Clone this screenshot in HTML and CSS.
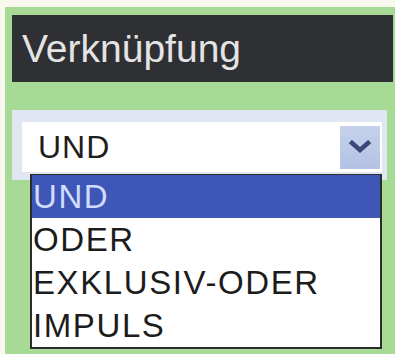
FILE: index.html
```html
<!DOCTYPE html>
<html lang="de">
<head>
<meta charset="utf-8">
<title>Verknüpfung</title>
<link rel="stylesheet" href="styles.css">
</head>
<body>
<div class="panel">
  <div class="header">Verknüpfung</div>
  <div class="select-frame">
    <div class="select">
      <span class="select-value">UND</span>
      <span class="select-btn">
        <svg width="24" height="14" viewBox="0 0 24 14"><path d="M4 3 L12 10 L20 3" fill="none" stroke="#3a4878" stroke-width="4.5" stroke-linecap="square"/></svg>
      </span>
    </div>
    <ul class="options">
      <li class="option selected">UND</li>
      <li class="option">ODER</li>
      <li class="option">EXKLUSIV-ODER</li>
      <li class="option">IMPULS</li>
    </ul>
  </div>
</div>
</body>
</html>
```
FILE: styles.css
```css
html, body {
  margin: 0;
  height: 100%;
}
body {
  background: #f8f8ee;
  padding: 7px 0 0 5px;
  box-sizing: border-box;
  overflow: hidden;
  font-family: "Liberation Sans", Arial, sans-serif;
}
.panel {
  background: #a7da95;
  height: 100%;
  padding: 8px 2px 0 7px;
  box-sizing: border-box;
}
.header {
  background: #2f3034;
  color: #e4e4e4;
  height: 67px;
  line-height: 67px;
  font-size: 39px;
  padding-left: 10px;
  box-sizing: border-box;
}
.select-frame {
  position: relative;
  margin-top: 28px;
  margin-right: 6px;
  background: #e1e7f2;
  padding: 12px 5px 8px 10px;
}
.select {
  display: flex;
  align-items: center;
  justify-content: space-between;
  background: #ffffff;
  height: 50px;
  padding: 0 2px 0 16px;
}
.select-value {
  font-size: 32px;
  letter-spacing: 1px;
  color: #1e1e1e;
  line-height: 50px;
}
.select-btn {
  display: flex;
  align-items: center;
  justify-content: center;
  width: 40px;
  height: 43px;
  background: linear-gradient(#c6d2ec, #b3c2e4);
}
.options {
  position: absolute;
  left: 18px;
  right: 5px;
  top: 64px;
  margin: 0;
  padding: 0;
  list-style: none;
  background: #ffffff;
  border: 2px solid #2c2c2c;
  border-top-width: 1px;
}
.option {
  height: 43px;
  line-height: 43px;
  font-size: 33px;
  letter-spacing: 1.6px;
  color: #1c1c1c;
  padding-left: 1px;
}
.option.selected {
  background: #3e56b6;
  color: #cfdcff;
}
```
